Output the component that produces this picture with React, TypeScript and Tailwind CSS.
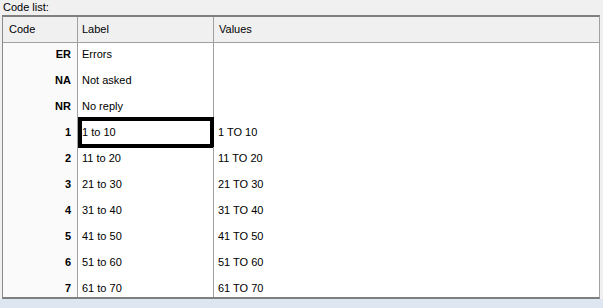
import React from "react";

interface CodeRow {
  code: string;
  label: string;
  values: string;
}

const rows: CodeRow[] = [
  { code: "ER", label: "Errors", values: "" },
  { code: "NA", label: "Not asked", values: "" },
  { code: "NR", label: "No reply", values: "" },
  { code: "1", label: "1 to 10", values: "1 TO 10" },
  { code: "2", label: "11 to 20", values: "11 TO 20" },
  { code: "3", label: "21 to 30", values: "21 TO 30" },
  { code: "4", label: "31 to 40", values: "31 TO 40" },
  { code: "5", label: "41 to 50", values: "41 TO 50" },
  { code: "6", label: "51 to 60", values: "51 TO 60" },
  { code: "7", label: "61 to 70", values: "61 TO 70" },
];

const App: React.FC = () => {
  const focused = "1";
  return (
    <div className="w-[603px] h-[308px] bg-[#f0f0f0] flex flex-col overflow-hidden font-['Liberation_Sans',Arial,sans-serif] text-[11px] text-black">
      <div className="h-[15px] pl-[3px] leading-[15px] shrink-0">Code list:</div>
      <div className="h-[284px] shrink-0 ml-[2px] mr-[3px] flex flex-col bg-white border-t-2 border-b-2 border-t-[#7f7f7f] border-b-[#7f7f7f] border-l border-r border-l-[#8a8a8a] border-r-[#a0a0a0] overflow-hidden">
        <div className="h-[26px] shrink-0 grid grid-cols-[75px_136px_1fr] bg-[#f0f0f0] border-b border-[#a0a0a0]">
          <div className="border-r border-[#a0a0a0] pl-[6px] flex items-center">Code</div>
          <div className="border-r border-[#a0a0a0] pl-[4px] flex items-center">Label</div>
          <div className="pl-[5px] flex items-center">Values</div>
        </div>
        <div className="flex-1 overflow-hidden">
          {rows.map((row) => (
            <div key={row.code} className="h-[26px] grid grid-cols-[75px_136px_1fr]">
              <div className="border-r border-[#a0a0a0] bg-[#fafafa] pr-[6px] pt-[5px] leading-[13px] text-right font-bold">
                {row.code}
              </div>
              <div className="relative border-r border-[#a0a0a0] pl-[4px] pt-[5px] leading-[13px]">
                {row.label}
                {row.code === focused && (
                  <div className="absolute -top-[4px] -bottom-[1px] left-0 -right-[1px] border-4 border-black"></div>
                )}
              </div>
              <div className="pl-[4px] pt-[5px] leading-[13px]">{row.values}</div>
            </div>
          ))}
        </div>
      </div>
      <div className="flex-1 bg-[#dde6f1]"></div>
    </div>
  );
};

export default App;
